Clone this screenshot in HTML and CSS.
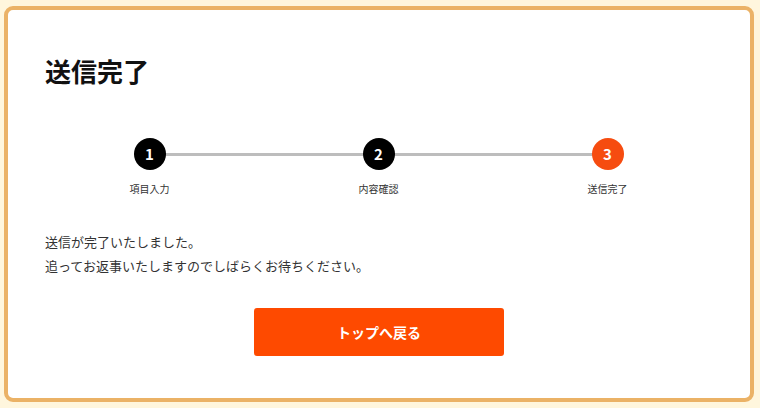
FILE: index.html
```html
<!DOCTYPE html>
<html lang="ja">
<head>
    <meta charset="UTF-8">
    <meta name="viewport" content="width=device-width, initial-scale=1.0">
    <title>送信完了</title>
    <link rel="stylesheet" href="styles.css">
</head>
<body>
    <div class="card">
        <h1 class="title">送信完了</h1>

        <ol class="steps">
            <li class="step"><span class="num">1</span><span class="label">項目入力</span></li>
            <li class="step"><span class="num">2</span><span class="label">内容確認</span></li>
            <li class="step current"><span class="num">3</span><span class="label">送信完了</span></li>
        </ol>

        <div class="message">
            <p>送信が完了いたしました。</p>
            <p>追ってお返事いたしますのでしばらくお待ちください。</p>
        </div>

        <div class="actions">
            <a class="btn" href="#">トップへ戻る</a>
        </div>
    </div>
</body>
</html>
```

FILE: styles.css
```css
body {
    margin: 0;
    padding: 6px 6px 6px 4px;
    background-color: #fff6dd;
    font-family: "Noto Sans CJK JP", "Noto Sans", sans-serif;
    color: #222;
}

.card {
    box-sizing: border-box;
    width: 750px;
    height: 396px;
    background: #fff;
    border: 4px solid #ebb266;
    border-radius: 9px;
    padding: 42px 37px 0 37px;
}

.title {
    margin: 0;
    font-size: 26px;
    line-height: 38px;
    font-weight: 700;
    color: #111;
}

.steps {
    list-style: none;
    margin: 48px 0 0 -10px;
    padding: 0;
    width: 687px;
    display: flex;
    position: relative;
}

.steps::before {
    content: "";
    position: absolute;
    top: 15px;
    left: 114px;
    right: 114px;
    height: 3px;
    background: #bdbdbd;
}

.step {
    width: 229px;
    display: flex;
    flex-direction: column;
    align-items: center;
    position: relative;
}

.num {
    width: 32px;
    height: 32px;
    border-radius: 50%;
    background: #000;
    color: #fff;
    font-size: 15px;
    font-weight: 700;
    line-height: 32px;
    text-align: center;
}

.current .num {
    background: #f64c10;
}

.label {
    margin-top: 12px;
    font-size: 10px;
    line-height: 14px;
    color: #333;
}

.message {
    margin-top: 34px;
    font-size: 13px;
    line-height: 24px;
    color: #333;
}

.message p {
    margin: 0;
}

.actions {
    display: flex;
    justify-content: center;
    margin-top: 30px;
}

.btn {
    display: block;
    width: 250px;
    height: 48px;
    line-height: 48px;
    background: #fe4a00;
    border-radius: 3px;
    color: #fff;
    font-size: 14px;
    font-weight: 700;
    text-align: center;
    text-decoration: none;
}
```
